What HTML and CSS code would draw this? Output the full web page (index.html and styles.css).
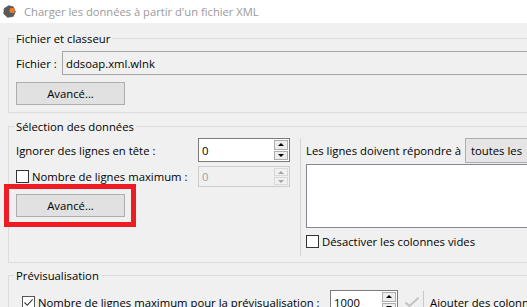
FILE: index.html
```html
<!DOCTYPE html>
<html lang="fr">
<head>
<meta charset="utf-8">
<title>Charger les données à partir d'un fichier XML</title>
<link rel="stylesheet" href="styles.css">
</head>
<body>
<div class="titlebar">
  <svg class="app-icon" width="13" height="13" viewBox="0 0 13 13" aria-hidden="true">
    <path d="M5.5 0.8 L10.2 1.8 L12.3 6.5 L10.2 11.4 L4.6 12.3 L0.8 8.8 L1.2 3.6 Z" fill="#5a5a5a" stroke="#5a5a5a" stroke-width="0.8" stroke-linejoin="round"/>
    <circle cx="9.2" cy="5.4" r="2.7" fill="#ee7a2a"/>
  </svg>
  <span class="title">Charger les données à partir d'un fichier XML</span>
</div>

<main class="content">
  <fieldset class="group g-file">
    <legend>Fichier et classeur</legend>
    <div class="file-row">
      <span class="file-label">Fichier :</span>
      <div class="textbox readonly">ddsoap.xml.wlnk</div>
    </div>
    <button class="btn" type="button">Avancé...</button>
  </fieldset>

  <fieldset class="group g-sel">
    <legend>Sélection des données</legend>
    <div class="sel-body">
      <div class="sel-left">
        <div class="field-row">
          <span class="field-label">Ignorer des lignes en tête :</span>
          <div class="spin">
            <span class="spin-val">0</span>
            <span class="spin-btns"><span class="sb up"></span><span class="sb down"></span></span>
          </div>
        </div>
        <div class="field-row row-max">
          <label class="check-label field-label"><span class="checkbox"></span>Nombre de lignes maximum :</label>
          <div class="spin disabled">
            <span class="spin-val">0</span>
            <span class="spin-btns"><span class="sb up"></span><span class="sb down"></span></span>
          </div>
        </div>
        <div class="highlight-wrap">
          <button class="btn" type="button">Avancé...</button>
          <span class="highlight"></span>
        </div>
      </div>
      <div class="vsep"></div>
      <div class="sel-right">
        <div class="match-row">
          <span class="match-label">Les lignes doivent répondre à</span>
          <div class="combo">toutes les</div>
        </div>
        <div class="listbox"></div>
        <label class="check-label empty-cols"><span class="checkbox"></span>Désactiver les colonnes vides</label>
      </div>
    </div>
  </fieldset>

  <fieldset class="group g-prev">
    <legend>Prévisualisation</legend>
    <div class="prev-row">
      <label class="check-label prev-label"><span class="checkbox checked"><svg width="11" height="11" viewBox="0 0 11 11"><path d="M1.5 5.5 L4.3 8.3 L9.6 2.4" fill="none" stroke="#333" stroke-width="1.1"/></svg></span>Nombre de lignes maximum pour la prévisualisation :</label>
      <div class="spin spin-prev">
        <span class="spin-val">1000</span>
        <span class="spin-btns"><span class="sb up"></span><span class="sb down"></span></span>
      </div>
      <svg class="apply-check" width="16" height="12" viewBox="0 0 16 12" aria-hidden="true"><path d="M1.5 6.5 L5.5 10 L14.5 1.8" fill="none" stroke="#c3c3c3" stroke-width="2"/></svg>
      <span class="vsep2"></span>
      <span class="add-cols">Ajouter des colonnes</span>
    </div>
  </fieldset>
</main>
</body>
</html>
```

FILE: styles.css
```css
html, body {
  margin: 0;
  padding: 0;
}
body {
  width: 527px;
  height: 307px;
  overflow: hidden;
  background: #f0f0f0;
  font-family: "Open Sans", "Noto Sans", sans-serif;
  font-size: 11.3px;
  line-height: 15px;
  color: #000;
}

.titlebar {
  height: 23px;
  background: #fff;
  display: flex;
  align-items: center;
  padding-left: 3px;
}
.app-icon {
  flex: none;
}
.title {
  margin-left: 8px;
  color: #9a9a9a;
  font-size: 11.2px;
  white-space: nowrap;
}

.content {
  padding-left: 8px;
}

.group {
  width: 640px;
  margin: 0;
  border: 1px solid #dcdcdc;
  min-inline-size: 0;
}
.group legend {
  padding: 0 2px;
  margin-left: -2px;
  line-height: 15px;
}

.g-file {
  margin-top: 8px;
  padding: 5px 8px 7px 7px;
}
.file-row {
  display: flex;
  align-items: center;
  height: 24px;
}
.file-label {
  width: 46px;
  flex: none;
}
.textbox {
  box-sizing: border-box;
  height: 24px;
  width: 560px;
  border: 1px solid #a6a6a6;
  padding-left: 3px;
  display: flex;
  align-items: center;
}
.textbox.readonly {
  background: #f0f0f0;
}

.btn {
  box-sizing: border-box;
  display: block;
  width: 109px;
  height: 23px;
  margin: 7px 0 0 0;
  padding: 0;
  border: 1px solid #adadad;
  background: #e1e1e1;
  font: inherit;
  color: #000;
}

.g-sel {
  margin-top: 6px;
  padding: 4px 8px 6px 7px;
}
.sel-body {
  display: flex;
  align-items: stretch;
}
.sel-left {
  width: 274px;
  flex: none;
}
.field-row {
  display: flex;
  align-items: center;
  height: 24px;
}
.field-row.row-max {
  margin-top: 4px;
  height: 21px;
}
.field-label {
  width: 182px;
  flex: none;
  white-space: nowrap;
}
.check-label {
  display: flex;
  align-items: center;
  white-space: nowrap;
}
.checkbox {
  box-sizing: border-box;
  width: 13px;
  height: 13px;
  flex: none;
  border: 1px solid #333;
  background: #fff;
  margin-right: 3px;
  display: flex;
  align-items: center;
  justify-content: center;
}
.checkbox svg {
  display: block;
}

.spin {
  box-sizing: border-box;
  width: 92px;
  height: 100%;
  border: 1px solid #7a7a7a;
  background: #fff;
  display: flex;
  flex: none;
}
.spin-val {
  flex: 1;
  padding-left: 3px;
  display: flex;
  align-items: center;
}
.spin-btns {
  width: 15px;
  flex: none;
  display: flex;
  flex-direction: column;
  padding: 1px 1px 1px 0;
  gap: 1px;
  box-sizing: border-box;
}
.sb {
  flex: 1;
  border: 1px solid #adadad;
  background: #ededed;
  display: flex;
  align-items: center;
  justify-content: center;
}
.sb::after {
  content: "";
  width: 0;
  height: 0;
  border-left: 3px solid transparent;
  border-right: 3px solid transparent;
}
.sb.up::after {
  border-bottom: 3px solid #000;
}
.sb.down::after {
  border-top: 3px solid #000;
}
.spin.disabled {
  border-color: #cccccc;
  background: #f0f0f0;
}
.spin.disabled .spin-val {
  color: #a0a0a0;
}
.spin.disabled .sb {
  border-color: #d9d9d9;
  background: #f0f0f0;
}
.spin.disabled .sb.up::after {
  border-bottom-color: #a3a3a3;
}
.spin.disabled .sb.down::after {
  border-top-color: #a3a3a3;
}

/* wrapper padding stops the button margin from collapsing through */
.highlight-wrap {
  position: relative;
  width: 109px;
  padding-top: 7px;
}
.highlight-wrap .btn {
  margin-top: 0;
}
.highlight {
  position: absolute;
  left: -12px;
  right: -11px;
  top: -3px;
  bottom: -10px;
  border: 5px solid #ed1c24;
  pointer-events: none;
}

.vsep {
  width: 1px;
  flex: none;
  margin-left: 10px;
  background: #d5d5d5;
}
.sel-right {
  padding-left: 5px;
  flex: 1;
  padding-bottom: 8px;
}
.match-row {
  display: flex;
  align-items: center;
  height: 25px;
}
.match-label {
  width: 159px;
  flex: none;
  white-space: nowrap;
}
.combo {
  box-sizing: border-box;
  height: 25px;
  width: 120px;
  border: 1px solid #adadad;
  background: #e5e5e5;
  padding-left: 5px;
  display: flex;
  align-items: center;
}
.listbox {
  box-sizing: border-box;
  margin-top: 1px;
  height: 64px;
  width: 300px;
  border: 1px solid #828790;
  background: #fff;
}
.empty-cols {
  margin-top: 7px;
  height: 13px;
}

.g-prev {
  margin-top: 5px;
  padding: 7px 8px 8px 7px;
}
.prev-row {
  display: flex;
  align-items: center;
  height: 24px;
}
.prev-label {
  width: 308px;
  flex: none;
  margin-left: 6px;
}
.checkbox.checked {
  border-color: #555;
}
.spin-prev {
  width: 68px;
}
.apply-check {
  margin-left: 6px;
  flex: none;
}
.vsep2 {
  width: 1px;
  height: 22px;
  margin-left: 3px;
  background: #c8c8c8;
  flex: none;
}
.add-cols {
  margin-left: 6px;
  white-space: nowrap;
}
```
